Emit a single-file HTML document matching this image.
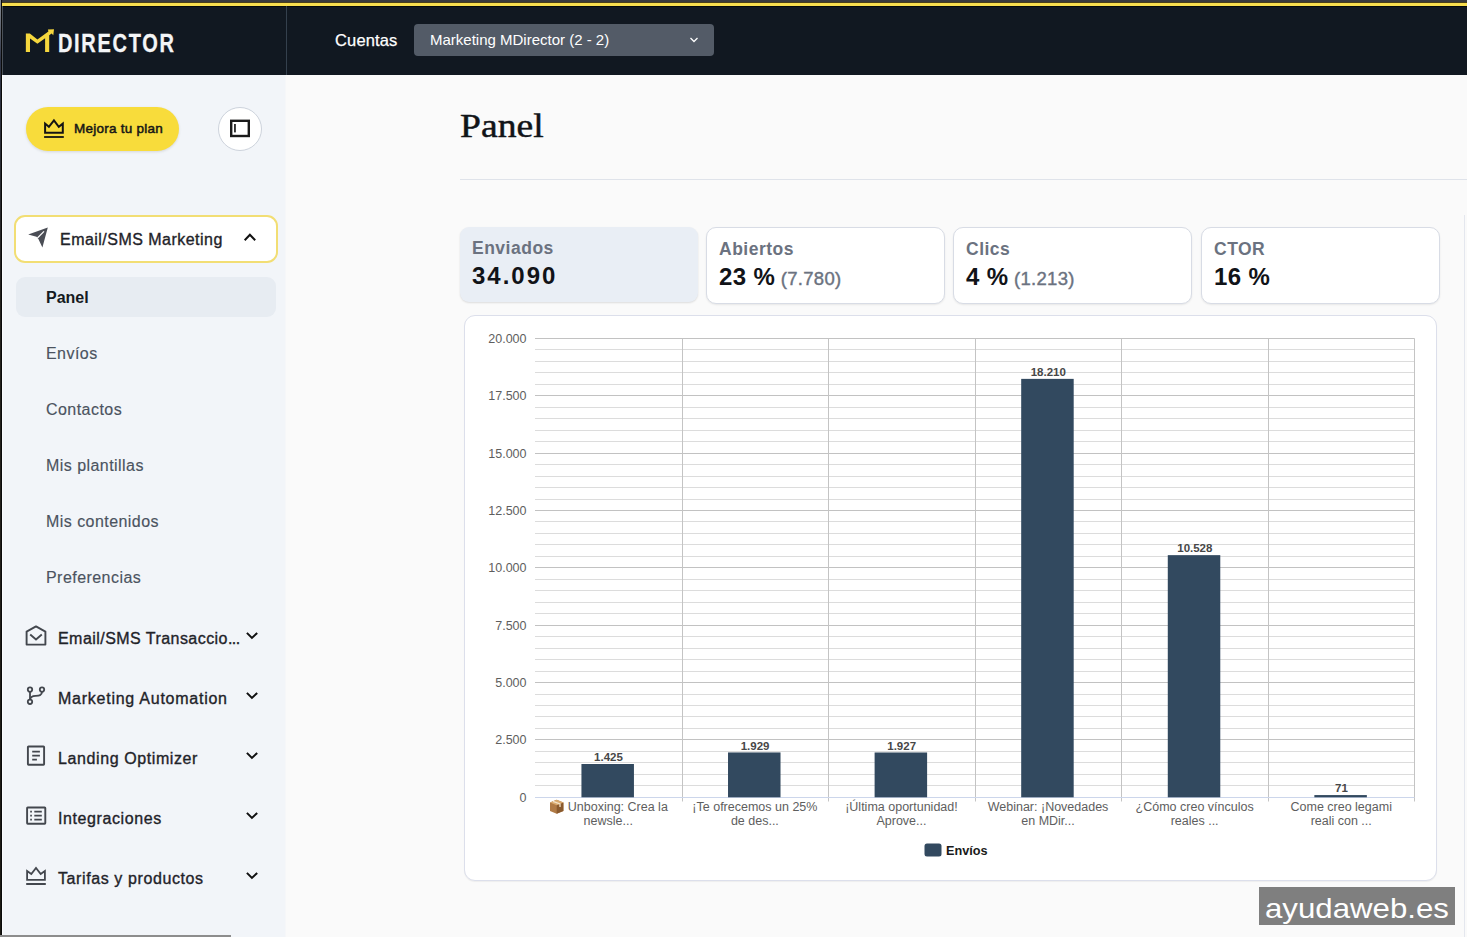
<!DOCTYPE html><html><head><meta charset="utf-8"><style>
*{box-sizing:border-box;margin:0;padding:0}
html,body{width:1467px;height:937px;overflow:hidden;background:#fafafa;font-family:"Liberation Sans",sans-serif;position:relative}
.a{position:absolute;white-space:pre}
</style></head><body>
<div class="a" style="left:0;top:0;width:1467px;height:3px;background:#3a3a3c"></div>
<div class="a" style="left:0;top:2px;width:1467px;height:1px;background:#4a3f1c"></div>
<div class="a" style="left:0;top:3px;width:1467px;height:3px;background:#f9de4e"></div>
<div class="a" style="left:0;top:6px;width:1467px;height:1px;background:#06090c"></div>
<div class="a" style="left:0;top:7px;width:1467px;height:68px;background:#111821"></div>
<div class="a" style="left:0;top:0;width:1px;height:937px;background:linear-gradient(#8a8f96 0px,#2f3547 60px,#25221e 300px,#1c1a14 937px)"></div>
<div class="a" style="left:1px;top:0;width:1px;height:937px;background:#0a0a0a"></div>
<div class="a" style="left:2px;top:6px;width:1px;height:69px;background:#4a5058"></div>
<div class="a" style="left:2px;top:75px;width:1px;height:862px;background:#fbfcfd"></div>
<div class="a" style="left:286px;top:6px;width:1px;height:69px;background:#34404d"></div>
<svg class="a" style="left:0;top:0" width="300" height="75" viewBox="0 0 300 75">
<path d="M25.85 52 L25.85 33.5 L29.85 33.5 L37.4 39.5 L48.4 31.4 L47.9 29.4 L54 29.3 L53.3 35.2 L51.6 33.6 L49.2 35.3 L49.2 52 L45.1 52 L45.1 38.3 L37.4 43.8 L30 38.5 L30 52 Z" fill="#f5d63d"/>
</svg>
<div class="a" style="left:58px;top:24.5px;font-size:25px;font-weight:700;color:#f4f5f7;transform-origin:0 0;transform:scaleX(0.8);line-height:36px;letter-spacing:2.1px;-webkit-text-stroke:0.3px #f4f5f7">DIRECTOR</div>
<div class="a" style="left:335px;top:29px;font-size:16.5px;color:#ffffff;line-height:22px;letter-spacing:0.15px;-webkit-text-stroke:0.25px #fff">Cuentas</div>
<div class="a" style="left:414px;top:24px;width:300px;height:32px;background:#535b67;border-radius:4px"></div>
<div class="a" style="left:430px;top:30px;font-size:15px;color:#ffffff;line-height:20px">Marketing MDirector (2 - 2)</div>
<svg class="a" style="left:688px;top:36px" width="12" height="8" viewBox="0 0 12 8"><path d="M2.5 2 L6 5.5 L9.5 2" fill="none" stroke="#fff" stroke-width="1.25"/></svg>
<div class="a" style="left:3px;top:75px;width:282px;height:862px;background:#f2f5f9"></div>
<div class="a" style="left:285px;top:75px;width:1px;height:862px;background:#f6f7f9"></div>
<div class="a" style="left:0;top:935px;width:231px;height:2px;background:#8d8d8d"></div>
<div class="a" style="left:26px;top:107px;width:153px;height:44px;background:#f8dc3b;border-radius:22px;box-shadow:0 1px 3px rgba(0,0,0,0.12)"></div>
<svg class="a" style="left:40px;top:115px" width="28" height="26" viewBox="0 0 28 26">
<path d="M5.1 17.8 V8.6 L8.9 11.8 L13.95 5.4 L18.8 11.8 L22.8 8.6 V17.8 Z" fill="none" stroke="#141414" stroke-width="2" stroke-linejoin="miter"/>
<rect x="4.1" y="21.1" width="19.7" height="1.8" fill="#141414"/>
</svg>
<div class="a" style="left:74px;top:120.3px;font-size:13.5px;font-weight:400;color:#161616;line-height:18px;-webkit-text-stroke:0.5px #161616;letter-spacing:0.25px">Mejora tu plan</div>
<div class="a" style="left:218px;top:107px;width:44px;height:44px;background:#fff;border:1px solid #cdd3dc;border-radius:50%"></div>
<svg class="a" style="left:228px;top:117px" width="24" height="24" viewBox="0 0 24 24">
<rect x="3.2" y="3.8" width="17.6" height="15.2" fill="none" stroke="#1a1a1a" stroke-width="2.4"/>
<rect x="6.1" y="7" width="1.7" height="8.4" fill="#1a1a1a"/>
</svg>
<div class="a" style="left:14px;top:215px;width:264px;height:48px;background:#fff;border:2px solid #f2de74;border-radius:11px"></div>
<svg class="a" style="left:22px;top:220px" width="36" height="36" viewBox="22 220 36 36">
<path d="M28.2 234.4 L47.8 227.5 L42.4 247.5 L38.4 239 L36.5 236.8 Z" fill="#4a4d55"/>
<path d="M44 231.3 L37.4 238" stroke="#fff" stroke-width="1.2"/>
</svg>
<div class="a" style="left:60px;top:230px;font-size:16px;color:#1f2329;line-height:20px;-webkit-text-stroke:0.35px #1f2329;letter-spacing:0.47px">Email/SMS Marketing</div>
<svg class="a" style="left:236px;top:225px" width="30" height="30" viewBox="236 225 30 30"><path d="M244.7 240.2 L249.9 234.8 L255.2 240.2" fill="none" stroke="#111" stroke-width="2"/></svg>
<div class="a" style="left:16px;top:277px;width:260px;height:40px;background:#e7ecf2;border-radius:9px"></div>
<div class="a" style="left:46px;top:288px;font-size:16px;font-weight:700;color:#151a21;line-height:20px">Panel</div>
<div class="a" style="left:46px;top:344.1px;font-size:16px;color:#4b5360;line-height:20px;letter-spacing:0.45px;-webkit-text-stroke:0.15px #4b5360">Envíos</div>
<div class="a" style="left:46px;top:400.1px;font-size:16px;color:#4b5360;line-height:20px;letter-spacing:0.45px;-webkit-text-stroke:0.15px #4b5360">Contactos</div>
<div class="a" style="left:46px;top:456.1px;font-size:16px;color:#4b5360;line-height:20px;letter-spacing:0.45px;-webkit-text-stroke:0.15px #4b5360">Mis plantillas</div>
<div class="a" style="left:46px;top:512.1px;font-size:16px;color:#4b5360;line-height:20px;letter-spacing:0.45px;-webkit-text-stroke:0.15px #4b5360">Mis contenidos</div>
<div class="a" style="left:46px;top:568.1px;font-size:16px;color:#4b5360;line-height:20px;letter-spacing:0.45px;-webkit-text-stroke:0.15px #4b5360">Preferencias</div>
<div class="a" style="left:58px;top:628.6px;font-size:16px;color:#1f2329;line-height:20px;-webkit-text-stroke:0.35px #1f2329;letter-spacing:0.45px">Email/SMS Transaccio<span style="letter-spacing:-0.6px">...</span></div>
<svg class="a" style="left:236px;top:622px" width="30" height="30" viewBox="236 622 30 30"><path d="M246.9 632.9 L251.9 637.9 L257.2 632.9" fill="none" stroke="#111" stroke-width="2"/></svg>
<div class="a" style="left:58px;top:688.6px;font-size:16px;color:#1f2329;line-height:20px;-webkit-text-stroke:0.35px #1f2329;letter-spacing:0.75px">Marketing Automation</div>
<svg class="a" style="left:236px;top:682px" width="30" height="30" viewBox="236 682 30 30"><path d="M246.9 692.9 L251.9 697.9 L257.2 692.9" fill="none" stroke="#111" stroke-width="2"/></svg>
<div class="a" style="left:58px;top:748.6px;font-size:16px;color:#1f2329;line-height:20px;-webkit-text-stroke:0.35px #1f2329;letter-spacing:0.6px">Landing Optimizer</div>
<svg class="a" style="left:236px;top:742px" width="30" height="30" viewBox="236 742 30 30"><path d="M246.9 752.9 L251.9 757.9 L257.2 752.9" fill="none" stroke="#111" stroke-width="2"/></svg>
<div class="a" style="left:58px;top:808.6px;font-size:16px;color:#1f2329;line-height:20px;-webkit-text-stroke:0.35px #1f2329;letter-spacing:0.6px">Integraciones</div>
<svg class="a" style="left:236px;top:802px" width="30" height="30" viewBox="236 802 30 30"><path d="M246.9 812.9 L251.9 817.9 L257.2 812.9" fill="none" stroke="#111" stroke-width="2"/></svg>
<div class="a" style="left:58px;top:868.6px;font-size:16px;color:#1f2329;line-height:20px;-webkit-text-stroke:0.35px #1f2329;letter-spacing:0.6px">Tarifas y productos</div>
<svg class="a" style="left:236px;top:862px" width="30" height="30" viewBox="236 862 30 30"><path d="M246.9 872.9 L251.9 877.9 L257.2 872.9" fill="none" stroke="#111" stroke-width="2"/></svg>
<svg class="a" style="left:20px;top:617px" width="40" height="40" viewBox="20 617 40 40">
<path d="M26.6 631.6 L36 626.4 L45.4 631.6 V644.6 H26.6 Z" fill="none" stroke="#43474e" stroke-width="1.9" stroke-linejoin="round"/>
<path d="M30.2 634.6 L36 639.4 L41.8 634.6" fill="none" stroke="#43474e" stroke-width="1.9"/>
</svg>
<svg class="a" style="left:20px;top:677px" width="40" height="40" viewBox="20 677 40 40">
<circle cx="30" cy="689.6" r="2.2" fill="none" stroke="#43474e" stroke-width="1.8"/>
<circle cx="42" cy="689.6" r="2.2" fill="none" stroke="#43474e" stroke-width="1.8"/>
<circle cx="30" cy="701.8" r="2.2" fill="none" stroke="#43474e" stroke-width="1.8"/>
<path d="M30 691.8 V699.6" stroke="#43474e" stroke-width="1.8"/>
<path d="M42 691.8 C42 695.5 39 695.6 35.5 695.8 C32 696 30.5 697 30.3 699" fill="none" stroke="#43474e" stroke-width="1.8"/>
</svg>
<svg class="a" style="left:20px;top:740px" width="40" height="40" viewBox="20 740 40 40">
<rect x="27.9" y="746.5" width="16.2" height="18.2" rx="0.6" fill="none" stroke="#43474e" stroke-width="1.9"/>
<path d="M32.2 751.6 H39.9 M32.2 755.6 H39.9 M32.2 759.6 H36.9" stroke="#43474e" stroke-width="1.7"/>
</svg>
<svg class="a" style="left:20px;top:800px" width="40" height="40" viewBox="20 800 40 40">
<rect x="27.1" y="807.5" width="18.2" height="16.2" rx="0.6" fill="none" stroke="#43474e" stroke-width="1.9"/>
<path d="M34.3 811.6 H41.8 M34.3 815.6 H41.8 M34.3 819.6 H41.8" stroke="#43474e" stroke-width="1.7"/>
<path d="M30.2 811.6 H31.9 M30.2 815.6 H31.9 M30.2 819.6 H31.9" stroke="#43474e" stroke-width="1.7"/>
</svg>
<svg class="a" style="left:20px;top:860px" width="40" height="40" viewBox="20 860 40 40">
<path d="M27.1 879.8 V871 L31.3 874 L36 868 L40.7 874 L44.9 871 V879.8 Z" fill="none" stroke="#43474e" stroke-width="1.8" stroke-linejoin="miter"/>
<rect x="26.2" y="883" width="19.6" height="2" fill="#43474e"/>
</svg>
<div class="a" style="left:287px;top:75px;width:1180px;height:862px;background:#fafafa"></div>
<div class="a" style="left:1464px;top:215px;width:1px;height:722px;background:#e4e7ee"></div>
<div class="a" style="left:460px;top:105.5px;font-size:33.3px;font-family:'Liberation Serif',serif;color:#111418;line-height:40px;transform-origin:0 0;transform:scaleX(1.13);-webkit-text-stroke:0.45px #111418">Panel</div>
<div class="a" style="left:460px;top:179px;width:1007px;height:1px;background:#dfe3ea"></div>
<div class="a" style="left:460px;top:227px;width:238px;height:75px;background:#e9eef5;border-radius:9px;box-shadow:0 1px 2px rgba(0,0,0,0.12)"></div>
<div class="a" style="left:472px;top:238px;font-size:17.5px;font-weight:700;color:#6b7280;line-height:20px;letter-spacing:0.5px">Enviados</div>
<div class="a" style="left:472px;top:263px;font-size:24px;font-weight:700;color:#111318;line-height:26px;letter-spacing:2.0px">34.090</div>
<div class="a" style="left:706px;top:227px;width:239px;height:76.5px;background:#fff;border:1px solid #d8dce5;border-radius:10px;box-shadow:0 1px 2px rgba(0,0,0,0.08)"></div>
<div class="a" style="left:719px;top:239px;font-size:17.5px;font-weight:700;color:#6b7280;line-height:20px;letter-spacing:0.5px">Abiertos</div>
<div class="a" style="left:719px;top:264px;font-size:24px;font-weight:700;color:#111318;line-height:26px;letter-spacing:0.4px">23 %<span style="font-size:18.5px;font-weight:400;color:#6b7280;letter-spacing:0.3px;-webkit-text-stroke:0.4px #6b7280"> (7.780)</span></div>
<div class="a" style="left:953px;top:227px;width:239px;height:76.5px;background:#fff;border:1px solid #d8dce5;border-radius:10px;box-shadow:0 1px 2px rgba(0,0,0,0.08)"></div>
<div class="a" style="left:966px;top:239px;font-size:17.5px;font-weight:700;color:#6b7280;line-height:20px;letter-spacing:0.5px">Clics</div>
<div class="a" style="left:966px;top:264px;font-size:24px;font-weight:700;color:#111318;line-height:26px;letter-spacing:0.4px">4 %<span style="font-size:18.5px;font-weight:400;color:#6b7280;letter-spacing:0.3px;-webkit-text-stroke:0.4px #6b7280"> (1.213)</span></div>
<div class="a" style="left:1201px;top:227px;width:239px;height:76.5px;background:#fff;border:1px solid #d8dce5;border-radius:10px;box-shadow:0 1px 2px rgba(0,0,0,0.08)"></div>
<div class="a" style="left:1214px;top:239px;font-size:17.5px;font-weight:700;color:#6b7280;line-height:20px;letter-spacing:0.5px">CTOR</div>
<div class="a" style="left:1214px;top:264px;font-size:24px;font-weight:700;color:#111318;line-height:26px;letter-spacing:0.4px">16 %</div>
<div class="a" style="left:464px;top:315px;width:973px;height:566px;background:#fff;border:1px solid #dcdfeb;border-radius:11px;box-shadow:0 1px 1px rgba(0,0,0,0.05)"></div>
<svg class="a" style="left:0;top:0" width="1467" height="937" viewBox="0 0 1467 937">
<path d="M535.0 785.5 H1414.5" stroke="#dcdcdc" stroke-width="1"/>
<path d="M535.0 774.5 H1414.5" stroke="#dcdcdc" stroke-width="1"/>
<path d="M535.0 762.5 H1414.5" stroke="#dcdcdc" stroke-width="1"/>
<path d="M535.0 751.5 H1414.5" stroke="#dcdcdc" stroke-width="1"/>
<path d="M535.0 739.5 H1414.5" stroke="#c2c2c2" stroke-width="1"/>
<path d="M535.0 728.5 H1414.5" stroke="#dcdcdc" stroke-width="1"/>
<path d="M535.0 716.5 H1414.5" stroke="#dcdcdc" stroke-width="1"/>
<path d="M535.0 705.5 H1414.5" stroke="#dcdcdc" stroke-width="1"/>
<path d="M535.0 694.5 H1414.5" stroke="#dcdcdc" stroke-width="1"/>
<path d="M535.0 682.5 H1414.5" stroke="#c2c2c2" stroke-width="1"/>
<path d="M535.0 671.5 H1414.5" stroke="#dcdcdc" stroke-width="1"/>
<path d="M535.0 659.5 H1414.5" stroke="#dcdcdc" stroke-width="1"/>
<path d="M535.0 648.5 H1414.5" stroke="#dcdcdc" stroke-width="1"/>
<path d="M535.0 636.5 H1414.5" stroke="#dcdcdc" stroke-width="1"/>
<path d="M535.0 625.5 H1414.5" stroke="#c2c2c2" stroke-width="1"/>
<path d="M535.0 613.5 H1414.5" stroke="#dcdcdc" stroke-width="1"/>
<path d="M535.0 602.5 H1414.5" stroke="#dcdcdc" stroke-width="1"/>
<path d="M535.0 590.5 H1414.5" stroke="#dcdcdc" stroke-width="1"/>
<path d="M535.0 579.5 H1414.5" stroke="#dcdcdc" stroke-width="1"/>
<path d="M535.0 567.5 H1414.5" stroke="#c2c2c2" stroke-width="1"/>
<path d="M535.0 556.5 H1414.5" stroke="#dcdcdc" stroke-width="1"/>
<path d="M535.0 544.5 H1414.5" stroke="#dcdcdc" stroke-width="1"/>
<path d="M535.0 533.5 H1414.5" stroke="#dcdcdc" stroke-width="1"/>
<path d="M535.0 521.5 H1414.5" stroke="#dcdcdc" stroke-width="1"/>
<path d="M535.0 510.5 H1414.5" stroke="#c2c2c2" stroke-width="1"/>
<path d="M535.0 499.5 H1414.5" stroke="#dcdcdc" stroke-width="1"/>
<path d="M535.0 487.5 H1414.5" stroke="#dcdcdc" stroke-width="1"/>
<path d="M535.0 476.5 H1414.5" stroke="#dcdcdc" stroke-width="1"/>
<path d="M535.0 464.5 H1414.5" stroke="#dcdcdc" stroke-width="1"/>
<path d="M535.0 453.5 H1414.5" stroke="#c2c2c2" stroke-width="1"/>
<path d="M535.0 441.5 H1414.5" stroke="#dcdcdc" stroke-width="1"/>
<path d="M535.0 430.5 H1414.5" stroke="#dcdcdc" stroke-width="1"/>
<path d="M535.0 418.5 H1414.5" stroke="#dcdcdc" stroke-width="1"/>
<path d="M535.0 407.5 H1414.5" stroke="#dcdcdc" stroke-width="1"/>
<path d="M535.0 395.5 H1414.5" stroke="#c2c2c2" stroke-width="1"/>
<path d="M535.0 384.5 H1414.5" stroke="#dcdcdc" stroke-width="1"/>
<path d="M535.0 372.5 H1414.5" stroke="#dcdcdc" stroke-width="1"/>
<path d="M535.0 361.5 H1414.5" stroke="#dcdcdc" stroke-width="1"/>
<path d="M535.0 349.5 H1414.5" stroke="#dcdcdc" stroke-width="1"/>
<path d="M535.0 338.5 H1414.5" stroke="#c2c2c2" stroke-width="1"/>
<path d="M682.5 338.4 V801.5" stroke="#c4c4c4" stroke-width="1"/>
<path d="M828.5 338.4 V801.5" stroke="#c4c4c4" stroke-width="1"/>
<path d="M975.5 338.4 V801.5" stroke="#c4c4c4" stroke-width="1"/>
<path d="M1121.5 338.4 V801.5" stroke="#c4c4c4" stroke-width="1"/>
<path d="M1268.5 338.4 V801.5" stroke="#c4c4c4" stroke-width="1"/>
<path d="M1414.5 338.4 V801.5" stroke="#c4c4c4" stroke-width="1"/>
<path d="M535.0 797.5 H1414.5" stroke="#ccd6eb" stroke-width="1"/>
<rect x="581.44" y="764.00" width="52.5" height="33.30" fill="#32495f"/>
<text x="608.49" y="761.20" text-anchor="middle" font-family="Liberation Sans" font-weight="700" font-size="11.5" fill="#474747">1.425</text>
<rect x="728.02" y="752.44" width="52.5" height="44.86" fill="#32495f"/>
<text x="755.07" y="749.64" text-anchor="middle" font-family="Liberation Sans" font-weight="700" font-size="11.5" fill="#474747">1.929</text>
<rect x="874.61" y="752.48" width="52.5" height="44.82" fill="#32495f"/>
<text x="901.66" y="749.68" text-anchor="middle" font-family="Liberation Sans" font-weight="700" font-size="11.5" fill="#474747">1.927</text>
<rect x="1021.19" y="378.87" width="52.5" height="418.43" fill="#32495f"/>
<text x="1048.24" y="376.07" text-anchor="middle" font-family="Liberation Sans" font-weight="700" font-size="11.5" fill="#474747">18.210</text>
<rect x="1167.78" y="555.14" width="52.5" height="242.16" fill="#32495f"/>
<text x="1194.83" y="552.34" text-anchor="middle" font-family="Liberation Sans" font-weight="700" font-size="11.5" fill="#474747">10.528</text>
<rect x="1314.36" y="795.07" width="52.5" height="2.23" fill="#32495f"/>
<text x="1341.41" y="792.27" text-anchor="middle" font-family="Liberation Sans" font-weight="700" font-size="11.5" fill="#474747">71</text>
<text x="526.5" y="801.70" text-anchor="end" font-family="Liberation Sans" font-size="12.5" fill="#5e5e5e">0</text>
<text x="526.5" y="744.34" text-anchor="end" font-family="Liberation Sans" font-size="12.5" fill="#5e5e5e">2.500</text>
<text x="526.5" y="686.97" text-anchor="end" font-family="Liberation Sans" font-size="12.5" fill="#5e5e5e">5.000</text>
<text x="526.5" y="629.61" text-anchor="end" font-family="Liberation Sans" font-size="12.5" fill="#5e5e5e">7.500</text>
<text x="526.5" y="572.25" text-anchor="end" font-family="Liberation Sans" font-size="12.5" fill="#5e5e5e">10.000</text>
<text x="526.5" y="514.89" text-anchor="end" font-family="Liberation Sans" font-size="12.5" fill="#5e5e5e">12.500</text>
<text x="526.5" y="457.52" text-anchor="end" font-family="Liberation Sans" font-size="12.5" fill="#5e5e5e">15.000</text>
<text x="526.5" y="400.16" text-anchor="end" font-family="Liberation Sans" font-size="12.5" fill="#5e5e5e">17.500</text>
<text x="526.5" y="342.80" text-anchor="end" font-family="Liberation Sans" font-size="12.5" fill="#5e5e5e">20.000</text>
<text x="608.29" y="810.9" text-anchor="middle" font-family="Liberation Sans" font-size="12.5" fill="#5e5e5e"></text>
<text x="608.29" y="824.6" text-anchor="middle" font-family="Liberation Sans" font-size="12.5" fill="#5e5e5e">newsle...</text>
<text x="754.88" y="810.9" text-anchor="middle" font-family="Liberation Sans" font-size="12.5" fill="#5e5e5e">¡Te ofrecemos un 25%</text>
<text x="754.88" y="824.6" text-anchor="middle" font-family="Liberation Sans" font-size="12.5" fill="#5e5e5e">de des...</text>
<text x="901.46" y="810.9" text-anchor="middle" font-family="Liberation Sans" font-size="12.5" fill="#5e5e5e">¡Última oportunidad!</text>
<text x="901.46" y="824.6" text-anchor="middle" font-family="Liberation Sans" font-size="12.5" fill="#5e5e5e">Aprove...</text>
<text x="1048.04" y="810.9" text-anchor="middle" font-family="Liberation Sans" font-size="12.5" fill="#5e5e5e">Webinar: ¡Novedades</text>
<text x="1048.04" y="824.6" text-anchor="middle" font-family="Liberation Sans" font-size="12.5" fill="#5e5e5e">en MDir...</text>
<text x="1194.62" y="810.9" text-anchor="middle" font-family="Liberation Sans" font-size="12.5" fill="#5e5e5e">¿Cómo creo vínculos</text>
<text x="1194.62" y="824.6" text-anchor="middle" font-family="Liberation Sans" font-size="12.5" fill="#5e5e5e">reales ...</text>
<text x="1341.21" y="810.9" text-anchor="middle" font-family="Liberation Sans" font-size="12.5" fill="#5e5e5e">Come creo legami</text>
<text x="1341.21" y="824.6" text-anchor="middle" font-family="Liberation Sans" font-size="12.5" fill="#5e5e5e">reali con ...</text>
<text x="567.8" y="810.9" font-family="Liberation Sans" font-size="12.5" fill="#5e5e5e">Unboxing: Crea la</text>
<g><path d="M550 802.5 L556.7 799.8 L563.4 802.5 L563.4 811 L556.7 813.7 L550 811 Z" fill="#b07a45"/><path d="M556.7 805.2 L563.4 802.5 L563.4 811 L556.7 813.7 Z" fill="#8a5a2e"/><path d="M550 802.5 L556.7 799.8 L563.4 802.5 L556.7 805.2 Z" fill="#d9a96e"/><path d="M553 801.3 L560 804 V807" stroke="#f2e2c8" stroke-width="1.3" fill="none"/></g>
<rect x="924.5" y="843.5" width="17" height="13" rx="2.5" fill="#32495f"/>
<text x="946" y="855" font-family="Liberation Sans" font-weight="700" font-size="12.7" fill="#1a1a1a">Envíos</text>
</svg>
<div class="a" style="left:1259px;top:887px;width:196px;height:38px;background:#7f7f7f"></div>
<div class="a" style="left:1265px;top:891.5px;font-size:27.5px;color:#fff;line-height:34px;transform-origin:0 0;transform:scaleX(1.135)">ayudaweb.es</div>
</body></html>
